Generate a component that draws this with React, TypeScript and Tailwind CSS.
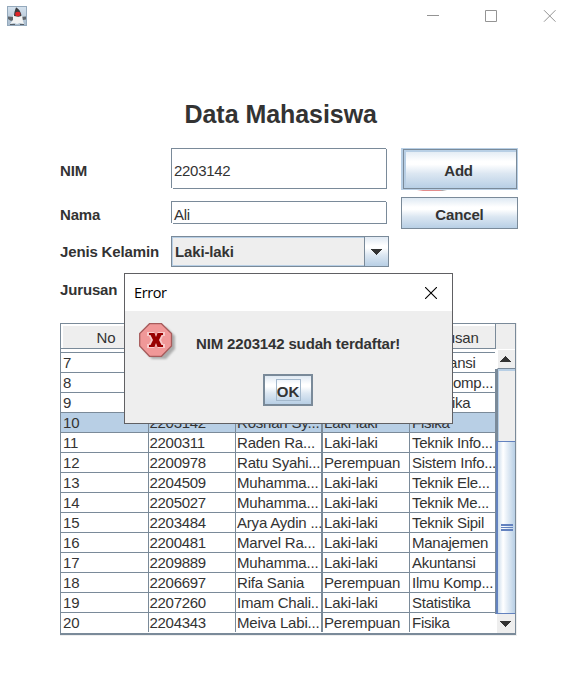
import type { ReactNode } from "react";

const rows = [
  ["7", "", "", "", "Akuntansi"],
  ["8", "", "", "", "Ilmu Komp..."],
  ["9", "", "", "", "Statistika"],
  ["10", "2203142", "Roshan Sy...", "Laki-laki", "Fisika"],
  ["11", "2200311", "Raden Ra...", "Laki-laki", "Teknik Info..."],
  ["12", "2200978", "Ratu Syahi...", "Perempuan", "Sistem Info..."],
  ["13", "2204509", "Muhamma...", "Laki-laki", "Teknik Ele..."],
  ["14", "2205027", "Muhamma...", "Laki-laki", "Teknik Me..."],
  ["15", "2203484", "Arya Aydin ...", "Laki-laki", "Teknik Sipil"],
  ["16", "2200481", "Marvel Ra...", "Laki-laki", "Manajemen"],
  ["17", "2209889", "Muhamma...", "Laki-laki", "Akuntansi"],
  ["18", "2206697", "Rifa Sania", "Perempuan", "Ilmu Komp..."],
  ["19", "2207260", "Imam Chali..", "Laki-laki", "Statistika"],
  ["20", "2204343", "Meiva Labi...", "Perempuan", "Fisika"],
];

const cellStyles = [
  "w-[88px] border-r pl-[2px]",
  "w-[87px] border-r pl-[0.5px]",
  "w-[87px] border-r-2 pl-[1px]",
  "w-[87px] border-r pl-[1px]",
  "w-[85px] pl-[2px]",
];

const textTracking = [
  "tracking-[-0.15px]",
  "tracking-[-0.3px]",
  "tracking-[-0.2px]",
  "tracking-[-0.15px]",
  "tracking-[-0.25px]",
];

const metal = "bg-[linear-gradient(180deg,#dfe9f3_0%,#ffffff_30%,#ffffff_38%,#dce7f2_62%,#b8cfe5_100%)]";

function Label({ children }: { children: ReactNode }) {
  return <div className="w-[111px] shrink-0 font-bold tracking-[-0.15px]">{children}</div>;
}

function Field({ value, height }: { value: string; height: string }) {
  return (
    <div className={`relative flex w-[216px] items-center border border-[#7a8a99] pl-[2px] ${height}`}>
      <span className="tracking-[-0.3px] translate-y-[2px]">{value}</span>
      <i className="absolute -right-px -top-px size-[1px] bg-white" />
      <i className="absolute -bottom-px -left-px h-px w-[2px] bg-white" />
    </div>
  );
}

function Down() {
  return (
    <svg width="12" height="6" viewBox="0 0 12 6" shapeRendering="crispEdges">
      <path d="M0 0h12L6 6z" fill="#333" />
    </svg>
  );
}

function Duke() {
  return (
    <svg width="20" height="20" viewBox="0 0 20 20">
      <defs>
        <linearGradient id="duke" x1="0" y1="0" x2="0" y2="1">
          <stop offset="0" stopColor="#d5e2ee" />
          <stop offset="1" stopColor="#a9bccd" />
        </linearGradient>
      </defs>
      <rect x="0.500" y="0.500" width="19" height="19" fill="url(#duke)" stroke="#94a9bc" />
      <path d="M1 10.500l6 .5v3l-3 1-3-2zM13 11l6-.5v3l-6 1z" fill="#5f666c" />
      <path d="M6 9h9l1 6 1 3-4-1-3 1-3-1-4 1 3-4z" fill="#f2f3f3" />
      <path d="M9 1.500C11 2 14 5.500 14.500 10l-3 .8-4.500-.8C7 7 8 4 9 1.500z" fill="#3b3d40" />
      <ellipse cx="10.800" cy="8" rx="2.600" ry="2.300" fill="#df2528" />
      <path d="M3 18.500h5M13 18.500h4" stroke="#596068" />
    </svg>
  );
}

function ErrorIcon() {
  return (
    <svg width="40" height="42" viewBox="0 0 40 42">
      <defs>
        <filter id="soft" x="-20%" y="-20%" width="140%" height="140%">
          <feGaussianBlur stdDeviation="1.300" />
        </filter>
      </defs>
      <path d="M13 4h14l9 9v13l-9 10H13l-9-10V13z" fill="#888" opacity=".65" filter="url(#soft)" />
      <path d="M10.500 .7h12l10 9.800v12.500l-10 10.300h-12L.7 23V10.500z" fill="#f09898" stroke="#a75c5c" strokeWidth="1.300" />
      <path d="M8 9h7l2 3 2-3h7v4h-2l-2 4 2 4h2v4h-7l-2-3-2 3H8v-4h2l2-4-2-4H8z" fill="#f6caca" />
      <path d="M10 10h5.500l1.500 4 1.500-4H24v2h-1.500L20 17l2.500 5H24v2h-5.500L17 20l-1.500 4H10v-2h1.500l2.500-5-2.500-5H10z" fill="#980000" />
    </svg>
  );
}

function ErrorDialog() {
  return (
    <div className="absolute left-[124px] top-[273px] flex h-[151px] w-[329px] flex-col border border-[#606063] bg-[#eeeeee]">
      <div className="flex h-[37px] shrink-0 items-center justify-between bg-white pl-[9px] pr-[15px]">
        <span className="font-['Open_Sans','Noto_Sans',sans-serif] text-[14.5px] tracking-[-0.4px] text-black">Error</span>
        <svg width="12" height="12" viewBox="0 0 12 12">
          <path d="M0 0l12 12M12 0L0 12" stroke="#000" strokeWidth="1.100" />
        </svg>
      </div>
      <div className="flex h-[63px] shrink-0 pl-[14px] pt-[12px]">
        <ErrorIcon />
        <div className="ml-[17px] mt-[12px] whitespace-nowrap font-bold leading-[17px] tracking-[-0.15px]">NIM 2203142 sudah terdaftar!</div>
      </div>
      <div className={`ml-[138px] flex h-[32px] w-[50px] shrink-0 items-center justify-center border-2 border-[#7a8a99] ${metal}`}>
        <div className="flex h-[22px] w-[25px] items-center justify-center border border-[#a3b8cc] pt-[3px] font-bold">OK</div>
      </div>
    </div>
  );
}

function Scrollbar() {
  return (
    <div className="flex w-[21px] shrink-0 flex-col border-r border-[#7a8a99]">
      <div className="h-[25px] border-l border-[#7a8a99] bg-[#eeeeee]" />
      <div className="ml-[2px] flex h-[20px] items-center justify-center border-b border-l border-t border-b-[#7a8a99] border-l-white border-t-white bg-[#eeeeee] pr-[3px]">
        <div className="rotate-180"><Down /></div>
      </div>
      <div className="h-[72px] border-l-[3px] border-[#7a8a99] bg-[#eeeeee] shadow-[inset_1px_2px_0_#b8cfe5]" />
      <div className="border-l border-[#7a8a99]">
        <div className="flex h-[173px] items-center justify-center border-b border-l-2 border-t border-[#6382bf] bg-[linear-gradient(90deg,#cddeed_0%,#ffffff_30%,#f4f8fc_40%,#b8cfe5_100%)]">
          <div className="h-[7px] w-[12px] border-y-2 border-[#6382bf] pt-px"><div className="h-px bg-[#6382bf]" /></div>
        </div>
      </div>
      <div className="ml-[2px] flex h-[19px] items-center justify-center bg-[#eeeeee] pr-[3px]">
        <Down />
      </div>
    </div>
  );
}

function StudentTable() {
  const line = "border-[#7a8a99]";
  return (
    <div className="ml-[60px] mt-[16px] w-[457px] border-b border-r border-[#eeeeee]">
      <div className={`flex w-[456px] border-b-2 border-l border-t ${line}`}>
        <div className="flex w-[434px] shrink-0 flex-col">
          <div className={`mb-[3px] flex h-[25px] border-b bg-[#eeeeee] leading-[28px] shadow-[inset_2px_2px_0_#fff] ${line}`}>
            <div className={`w-[88px] border-r pl-[3px] text-center ${line}`}>No</div>
            <div className={`w-[87px] border-r ${line}`} />
            <div className={`w-[87px] border-r ${line}`} />
            <div className={`w-[87px] border-r ${line}`} />
            <div className="w-[85px] text-center tracking-[-0.15px]">Jurusan</div>
          </div>
          {rows.map((row) => (
            <div key={row[0]} className={`flex h-[20px] border-t ${line} ${row[0] === "10" ? "bg-[#b8cfe5]" : "bg-white"}`}>
              {row.map((cell, i) => (
                <div key={i} className={`shrink-0 whitespace-nowrap leading-[19px] ${line} ${cellStyles[i]} ${textTracking[i]}`}>
                  {cell}
                </div>
              ))}
            </div>
          ))}
        </div>
        <Scrollbar />
      </div>
    </div>
  );
}

export default function App() {
  return (
    <main className="relative flex h-[691px] w-[575px] flex-col overflow-hidden bg-white font-['Liberation_Sans',Arial,sans-serif] text-[15px] leading-[17px] text-[#333333]">
      <header className="flex h-[32px] shrink-0 items-center pl-[7px] pr-[19px]">
        <Duke />
        <svg className="ml-auto" width="129" height="12" viewBox="0 0 129 12" fill="none" stroke="#949494">
          <path d="M0 5.500h12M58.500 .5h11v11h-11z" />
          <path d="M117 .2l11.500 11.500M128.500 .2L117 11.700" />
        </svg>
      </header>
      <h1 className="ml-[184.5px] mt-[67px] h-[49px] shrink-0 whitespace-nowrap text-[25px] font-bold leading-[30px] tracking-[-0.05px]">Data Mahasiswa</h1>
      <form className="flex shrink-0 pl-[60px]">
        <div className="flex w-[341px] flex-col">
          <div className="flex h-[53px] items-start">
            <Label><div className="pt-[14px]">NIM</div></Label>
            <Field value="2203142" height="h-[41px]" />
          </div>
          <div className="flex h-[35px] items-start">
            <Label><div className="pt-[5px]">Nama</div></Label>
            <Field value="Ali" height="h-[23px]" />
          </div>
          <div className="flex h-[31px] items-center">
            <Label>Jenis Kelamin</Label>
            <div className="flex h-[31px] w-[218px] border border-[#7a8a99]">
              <div className="flex flex-1 items-center border border-r-0 border-[#b8cfe5] bg-[#eeeeee] pl-[2px] font-bold tracking-[-0.15px]">Laki-laki</div>
              <div className={`flex w-[24px] items-center justify-center border-l border-[#7a8a99] pr-[2px] ${metal}`}><Down /></div>
            </div>
          </div>
          <div className="flex h-[40px] items-center pt-[4px]"><Label>Jurusan</Label></div>
        </div>
        <div className="flex w-[117px] flex-col">
          <div className="h-[42px] bg-[#b8cfe5] pl-[2px] pr-[1px] pt-[1px]">
            <div className={`flex h-[40px] items-center justify-center border border-[#7a8a99] pt-[3px] pr-[3px] font-bold tracking-[-0.3px] shadow-[inset_1px_1px_0_1px_#b8cfe5] ${metal}`}>Add</div>
          </div>
          <div className="ml-[16px] h-px w-[30px] bg-[linear-gradient(90deg,#fff,#e38c8c_20%,#e38c8c_75%,#aaa_85%,#fff)]" />
          <div className={`mt-[6px] flex h-[32px] w-[117px] items-center justify-center border border-[#7a8a99] pt-[2px] font-bold tracking-[-0.15px] ${metal}`}>Cancel</div>
        </div>
      </form>
      <StudentTable />
      <ErrorDialog />
    </main>
  );
}
